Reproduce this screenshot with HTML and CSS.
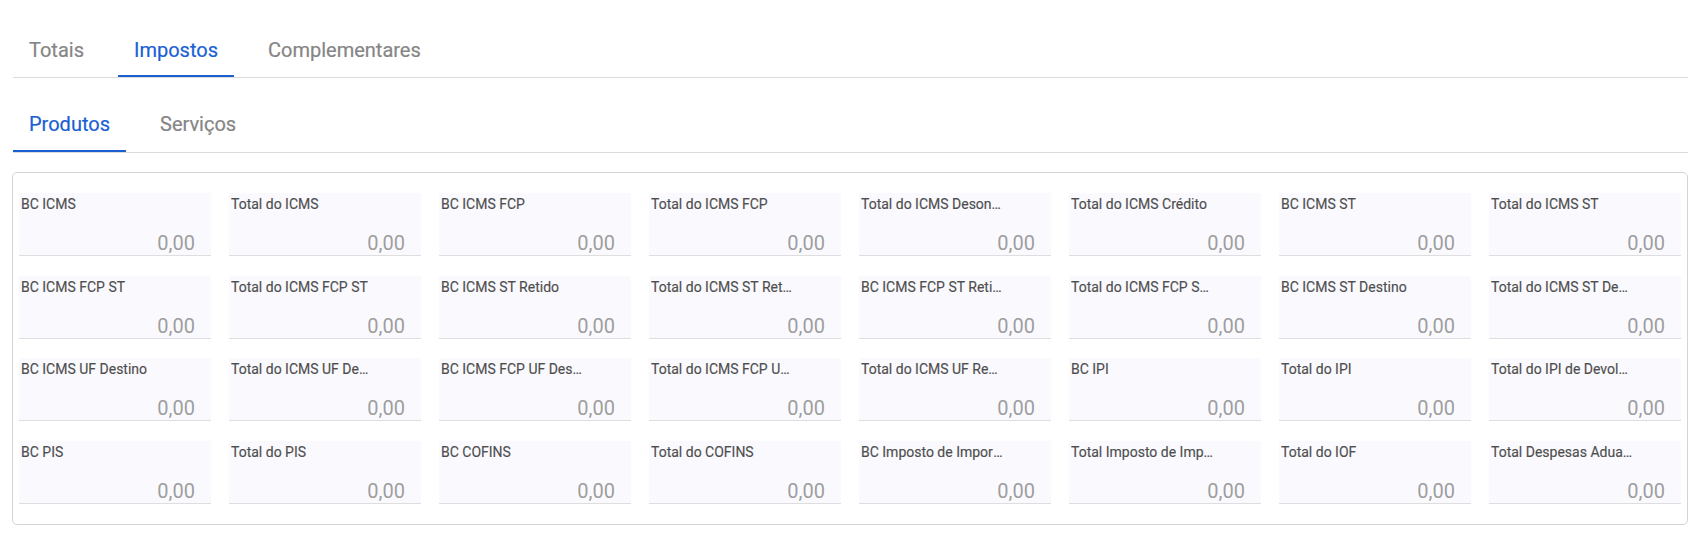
FILE: index.html
```html
<!DOCTYPE html>
<html lang="pt-BR">
<head>
<meta charset="utf-8">
<title>Impostos</title>
<link rel="stylesheet" href="styles.css">
</head>
<body>
<div class="page">
  <nav class="tabs tabs-main">
    <div class="tab">Totais</div>
    <div class="tab active">Impostos</div>
    <div class="tab">Complementares</div>
  </nav>
  <nav class="tabs tabs-sub">
    <div class="tab active">Produtos</div>
    <div class="tab">Serviços</div>
  </nav>
  <section class="card">
    <div class="grid">
      <div class="field"><div class="label">BC ICMS</div><div class="value">0,00</div></div>
      <div class="field"><div class="label">Total do ICMS</div><div class="value">0,00</div></div>
      <div class="field"><div class="label">BC ICMS FCP</div><div class="value">0,00</div></div>
      <div class="field"><div class="label">Total do ICMS FCP</div><div class="value">0,00</div></div>
      <div class="field"><div class="label">Total do ICMS Desonerado</div><div class="value">0,00</div></div>
      <div class="field"><div class="label">Total do ICMS Crédito</div><div class="value">0,00</div></div>
      <div class="field"><div class="label">BC ICMS ST</div><div class="value">0,00</div></div>
      <div class="field"><div class="label">Total do ICMS ST</div><div class="value">0,00</div></div>

      <div class="field"><div class="label">BC ICMS FCP ST</div><div class="value">0,00</div></div>
      <div class="field"><div class="label">Total do ICMS FCP ST</div><div class="value">0,00</div></div>
      <div class="field"><div class="label">BC ICMS ST Retido</div><div class="value">0,00</div></div>
      <div class="field"><div class="label">Total do ICMS ST Retido</div><div class="value">0,00</div></div>
      <div class="field"><div class="label">BC ICMS FCP ST Retido</div><div class="value">0,00</div></div>
      <div class="field"><div class="label">Total do ICMS FCP ST Retido</div><div class="value">0,00</div></div>
      <div class="field"><div class="label">BC ICMS ST Destino</div><div class="value">0,00</div></div>
      <div class="field"><div class="label">Total do ICMS ST Destino</div><div class="value">0,00</div></div>

      <div class="field"><div class="label">BC ICMS UF Destino</div><div class="value">0,00</div></div>
      <div class="field"><div class="label">Total do ICMS UF Destino</div><div class="value">0,00</div></div>
      <div class="field"><div class="label">BC ICMS FCP UF Destino</div><div class="value">0,00</div></div>
      <div class="field"><div class="label">Total do ICMS FCP UF Destino</div><div class="value">0,00</div></div>
      <div class="field"><div class="label">Total do ICMS UF Remetente</div><div class="value">0,00</div></div>
      <div class="field"><div class="label">BC IPI</div><div class="value">0,00</div></div>
      <div class="field"><div class="label">Total do IPI</div><div class="value">0,00</div></div>
      <div class="field"><div class="label">Total do IPI de Devolução</div><div class="value">0,00</div></div>

      <div class="field"><div class="label">BC PIS</div><div class="value">0,00</div></div>
      <div class="field"><div class="label">Total do PIS</div><div class="value">0,00</div></div>
      <div class="field"><div class="label">BC COFINS</div><div class="value">0,00</div></div>
      <div class="field"><div class="label">Total do COFINS</div><div class="value">0,00</div></div>
      <div class="field"><div class="label">BC Imposto de Importação</div><div class="value">0,00</div></div>
      <div class="field"><div class="label">Total Imposto de Importação</div><div class="value">0,00</div></div>
      <div class="field"><div class="label">Total do IOF</div><div class="value">0,00</div></div>
      <div class="field"><div class="label">Total Despesas Aduaneiras</div><div class="value">0,00</div></div>
    </div>
  </section>
</div>
</body>
</html>
```

FILE: styles.css
```css
* { box-sizing: border-box; }

html, body {
  margin: 0;
  padding: 0;
  background: #ffffff;
}

body {
  font-family: Roboto, "Liberation Sans", Arial, sans-serif;
}

.page {
  width: 1676px;
  margin-left: 12px;
  padding-top: 29px;
}

.tabs {
  display: flex;
  gap: 18px;
  margin-left: 1px;
  border-bottom: 1px solid #dcdcdc;
}

.tabs-sub {
  margin-top: 25px;
}

.tab {
  padding: 10px 16px 13px;
  font-size: 20px;
  line-height: 23px;
  font-weight: 400;
  color: #858585;
  border-bottom: 2px solid transparent;
  white-space: nowrap;
  -webkit-text-stroke: 0.2px currentColor;
}

.tabs-sub .tab {
  padding-bottom: 14px;
}

.tab.active {
  color: #1b5fd3;
  border-bottom-color: #1b5fd3;
}

.card {
  margin-top: 19px;
  border: 1px solid #d4d4d4;
  border-radius: 5px;
  padding: 20px 6px;
}

.grid {
  display: grid;
  grid-template-columns: repeat(8, 192px);
  column-gap: 18px;
  row-gap: 19.67px;
}

.field {
  height: 63px;
  background: #fafafe;
  border-bottom: 1px solid #dedede;
  display: flex;
  flex-direction: column;
  justify-content: space-between;
  padding: 3px 16px 0 2px;
}

.label {
  font-size: 14px;
  line-height: 16px;
  font-weight: 400;
  color: #4e4e4e;
  max-width: 143px;
  white-space: nowrap;
  overflow: hidden;
  text-overflow: ellipsis;
  -webkit-text-stroke: 0.15px currentColor;
}

.value {
  font-size: 20px;
  line-height: 23px;
  color: #9e9e9e;
  text-align: right;
}
```
